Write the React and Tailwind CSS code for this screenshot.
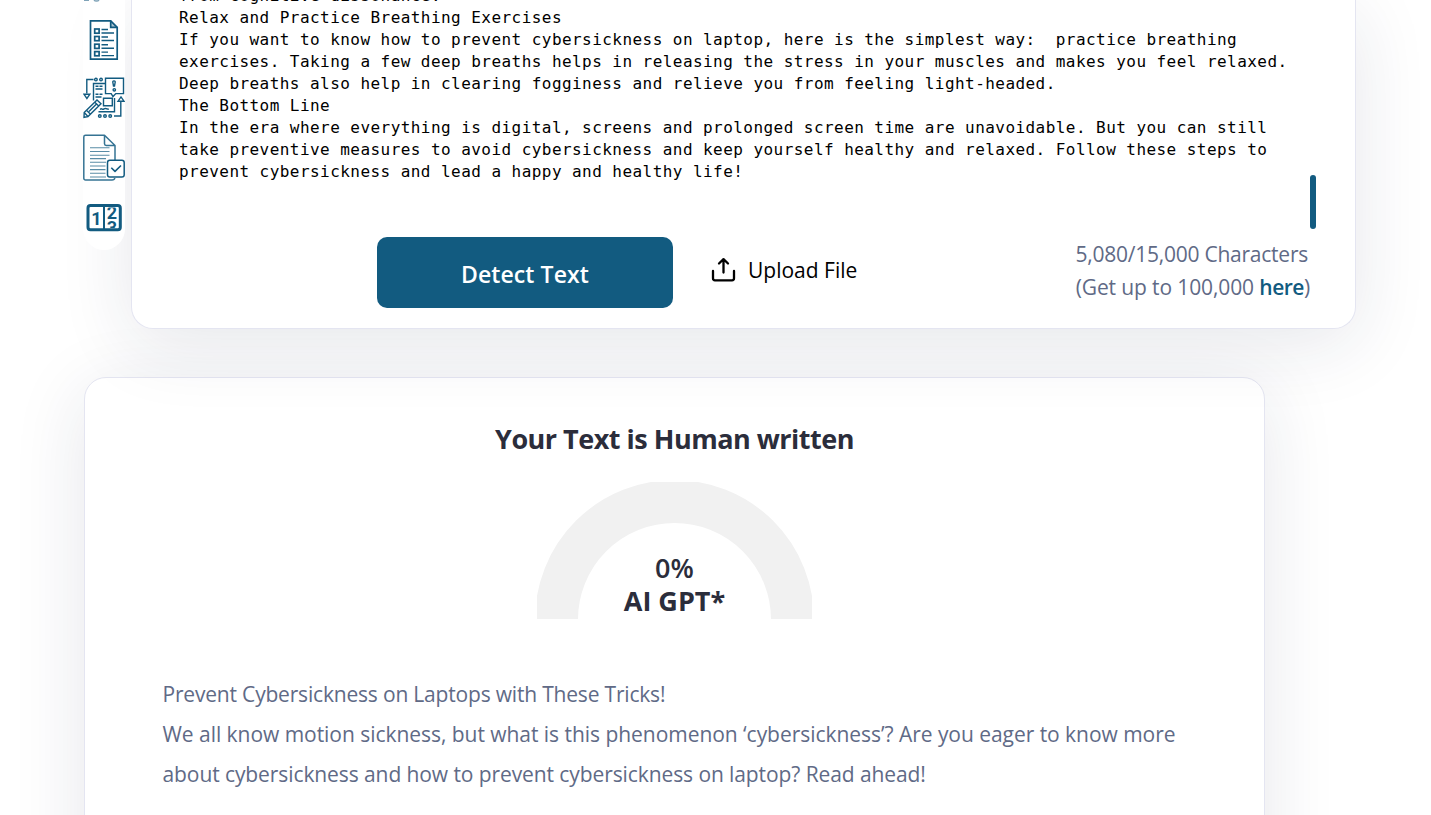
const LINES = [
  'from cognitive dissonance.',
  'Relax and Practice Breathing Exercises',
  'If you want to know how to prevent cybersickness on laptop, here is the simplest way:  practice breathing',
  'exercises. Taking a few deep breaths helps in releasing the stress in your muscles and makes you feel relaxed.',
  'Deep breaths also help in clearing fogginess and relieve you from feeling light-headed.',
  'The Bottom Line',
  'In the era where everything is digital, screens and prolonged screen time are unavoidable. But you can still',
  'take preventive measures to avoid cybersickness and keep yourself healthy and relaxed. Follow these steps to',
  'prevent cybersickness and lead a happy and healthy life!',
];

const RESULT = [
  { text: 'Prevent Cybersickness on Laptops with These Tricks!', spacing: 'tracking-[-0.19px]' },
  { text: 'We all know motion sickness, but what is this phenomenon ‘cybersickness’? Are you eager to know more', spacing: 'tracking-[-0.04px]' },
  { text: 'about cybersickness and how to prevent cybersickness on laptop? Read ahead!', spacing: 'tracking-[-0.09px]' },
];

function PartialIcon() {
  return (
    <svg width="42" height="2" viewBox="0 0 42 2" fill="none" stroke="#7fa3b8" strokeWidth="1.3">
      <path d="M1 .3h5M11 0c1 1.3 4 1.3 5 0" />
    </svg>
  );
}

function ListIcon() {
  return (
    <svg width="42" height="42" viewBox="0 0 42 42" fill="none" stroke="#125b80" strokeWidth="1.7">
      <path d="M7.5 1.8h20.200l6.500 6.500v31.900H7.500z" />
      <path d="M27.700 1.800v6.500h6.500" fill="#125b80" fillOpacity=".35" />
      {[10, 17.5, 25.2, 32.6].map((y) => (
        <g key={y}>
          <rect x="11.7" y={y} width="4.400" height="4.200" />
          <path d={`M18.5 ${y + 0.5}h6.5M18.5 ${y + 4}h12.5`} strokeWidth="1.4" />
        </g>
      ))}
    </svg>
  );
}

function WritingIcon() {
  return (
    <svg width="42" height="42" viewBox="0 0 42 42" fill="none" stroke="#125b80" strokeWidth="1.4">
      <path d="M10.5 2.5H3.8v14" />
      <path d="M1 17.3h5.8l-2.9 4.2z" />
      <circle cx="12.9" cy="2.6" r="1.3" />
      <circle cx="18" cy="2.6" r="1.3" />
      <path d="M22 6.5H10.5v17M31.5 21v13.8H15.5" />
      <path d="M22.5 1.3h18v15.3h-7.7l-2.8 3-1.8-3h-5.7z" />
      <path d="M31 3.9c-1.3 0-1.4 1-1 2.2l.5 3h1l.5-3c.4-1.2.3-2.2-1-2.2z" />
      <circle cx="31.3" cy="12.8" r="1.2" />
      <path d="M12.5 9.2h3m1 0h3M12.5 12h7M12.5 17.2h3m1 0h3M12.5 20h6" />
      <path d="M20.5 21.3h8.8v7.4h-8.8zM17 32.5c2-2 2 .8 4-.6s2 .6 5 .2" />
      <path d="M1.2 35.5 14 22.9l4 3.9L5 39.6l-4 .7z M11.8 25.2l3.9 3.8M3.5 33.3l4 4M6 34.5l8-8M1.2 35.5l3.8 4.1" />
      <path d="M31 39h6.8V24" />
      <path d="M35 24.2h6l-3-4.3z" />
      <circle cx="16.8" cy="39" r="1.3" />
      <circle cx="22" cy="39" r="1.3" />
      <circle cx="27.2" cy="39" r="1.3" />
    </svg>
  );
}

function CheckedDocIcon() {
  return (
    <svg width="42" height="48" viewBox="0 0 42 48" fill="none" stroke="#125b80" strokeWidth="1.5" strokeLinejoin="round">
      <path d="M19 46H2.5A1.7 1.7 0 0 1 .8 44.3V3A1.7 1.7 0 0 1 2.5 1.3h19L32 11.5V26M21.5 1.3v8.5a1.7 1.7 0 0 0 1.7 1.7H32M19 46h10q2.5 0 2.8-2" opacity=".85" />
      <g strokeWidth="1.1" opacity=".7">
        <path d="M7 13.8h19.5M7 17.5h19.5M7 21.3h19.5M7 24.6h16M7 28.3h16M7 32h15.5M7 35.6h15.5M7 39.3h15.5M7 43h16" />
      </g>
      <rect x="24.5" y="26.3" width="16.7" height="16.8" rx="2.3" fill="#fff" />
      <path d="m28.3 33.8 3.7 3.6 6-5.9" strokeWidth="1.6" />
    </svg>
  );
}

function CounterIcon() {
  return (
    <svg width="36" height="28" viewBox="0 0 36 28">
      <defs>
        <clipPath id="digits">
          <rect x="19.5" y="3.5" width="13.5" height="20.5" />
        </clipPath>
      </defs>
      <rect x="2" y="1.5" width="32.3" height="24.2" rx="2.5" fill="#fff" stroke="#125b80" strokeWidth="3" />
      <path d="M18 1v25" stroke="#125b80" strokeWidth="2" />
      <g fill="#125b80" fontFamily="Roboto" fontWeight="700" textAnchor="middle">
        <text x="10.3" y="20.5" fontSize="18">1</text>
        <g clipPath="url(#digits)" fontSize="18">
          <text x="26" y="15">2</text>
          <text x="26" y="30">3</text>
        </g>
      </g>
    </svg>
  );
}

function Sidebar() {
  return (
    <aside className="relative z-20 flex h-[250px] w-[42px] flex-col items-center rounded-b-[21px] bg-white">
      <PartialIcon />
      <div className="mt-[17px]"><ListIcon /></div>
      <div className="mt-[15.5px]"><WritingIcon /></div>
      <div className="mt-[15px]"><CheckedDocIcon /></div>
      <div className="mt-[22px]"><CounterIcon /></div>
    </aside>
  );
}

function UploadIcon() {
  return (
    <svg width="25" height="25" viewBox="0 0 25 25" fill="none" stroke="#000" strokeWidth="2.3" strokeLinecap="round" strokeLinejoin="round">
      <path d="M12.5 15.5V2.5M8 6.5l4.5-4.3L17 6.5M2 14v7.3a2 2 0 0 0 2 2h17a2 2 0 0 0 2-2V14" />
    </svg>
  );
}

function Editor() {
  return (
    <section className="relative z-10 flex h-[329px] w-[1225px] flex-col rounded-b-[22px] border border-t-0 border-[#e4e5f1] bg-white shadow-[0_14px_75px_rgba(27,33,76,0.11)]">
      <div className="flex h-[229px] items-end justify-between overflow-hidden pr-[39px] pl-[47px]">
        <div className="pb-[46px] font-['DejaVu_Sans_Mono',monospace] text-[16px] leading-[22px] tracking-[0.445px] whitespace-pre text-black">
          {LINES.map((line) => (
            <div key={line}>{line}</div>
          ))}
        </div>
        <div className="h-[54px] w-[6px] rounded-full bg-[#125b80]" />
      </div>

      <div className="mt-2 flex items-start pr-[45px] pl-[245px]">
        <button className="h-[71px] w-[296px] rounded-[10px] bg-[#125b80] pt-[3px] text-[23px] font-semibold tracking-[0.1px] text-white">
          Detect Text
        </button>
        <button className="mt-[16px] ml-[38px] flex items-center gap-3 text-[21px] text-black">
          <UploadIcon />
          <span className="pt-[2px]">Upload File</span>
        </button>
        <div className="ml-auto pt-[1px] text-right text-[21px] leading-[33px] tracking-[-0.24px] whitespace-nowrap text-[#606a86]">
          <p className="pr-[2px]">5,080/15,000 Characters</p>
          <p className="tracking-[-0.12px]">
            (Get up to 100,000 <a className="font-semibold tracking-[-0.5px] text-[#125b80]">here</a>)
          </p>
        </div>
      </div>
    </section>
  );
}

function Gauge() {
  return (
    <div className="relative mt-[26px] h-[137px] w-[275px]">
      <svg width="275" height="137" viewBox="0 0 275 137" fill="none">
        <circle cx="137.5" cy="137.5" r="118" stroke="#f1f1f1" strokeWidth="43" />
      </svg>
      <div className="absolute inset-x-0 bottom-[2px] text-center text-[27px] leading-[33px] font-bold text-[#2b2d3b]">
        <p className="font-semibold">0%</p>
        <p>AI GPT*</p>
      </div>
    </div>
  );
}

export default function App() {
  return (
    <div className="h-screen overflow-hidden bg-white pl-[83px] font-['Open_Sans','Noto_Sans',sans-serif]">
      <div className="flex gap-[6px]">
        <Sidebar />
        <Editor />
      </div>

      <section className="mt-12 ml-[1px] flex h-[600px] w-[1181px] flex-col items-center rounded-[22px] border border-[#e4e5f1] bg-white pt-[43px] shadow-[0_14px_75px_rgba(27,33,76,0.11)]">
        <h2 className="text-[27px] leading-[35px] font-bold tracking-[-0.5px] text-[#2b2d3b]">Your Text is Human written</h2>
        <Gauge />
        <div className="mt-[55px] self-start pl-[77.5px] text-[21px] leading-[40px] whitespace-nowrap text-[#606a86]">
          {RESULT.map((line) => (
            <p key={line.text} className={line.spacing}>{line.text}</p>
          ))}
        </div>
      </section>
    </div>
  );
}
